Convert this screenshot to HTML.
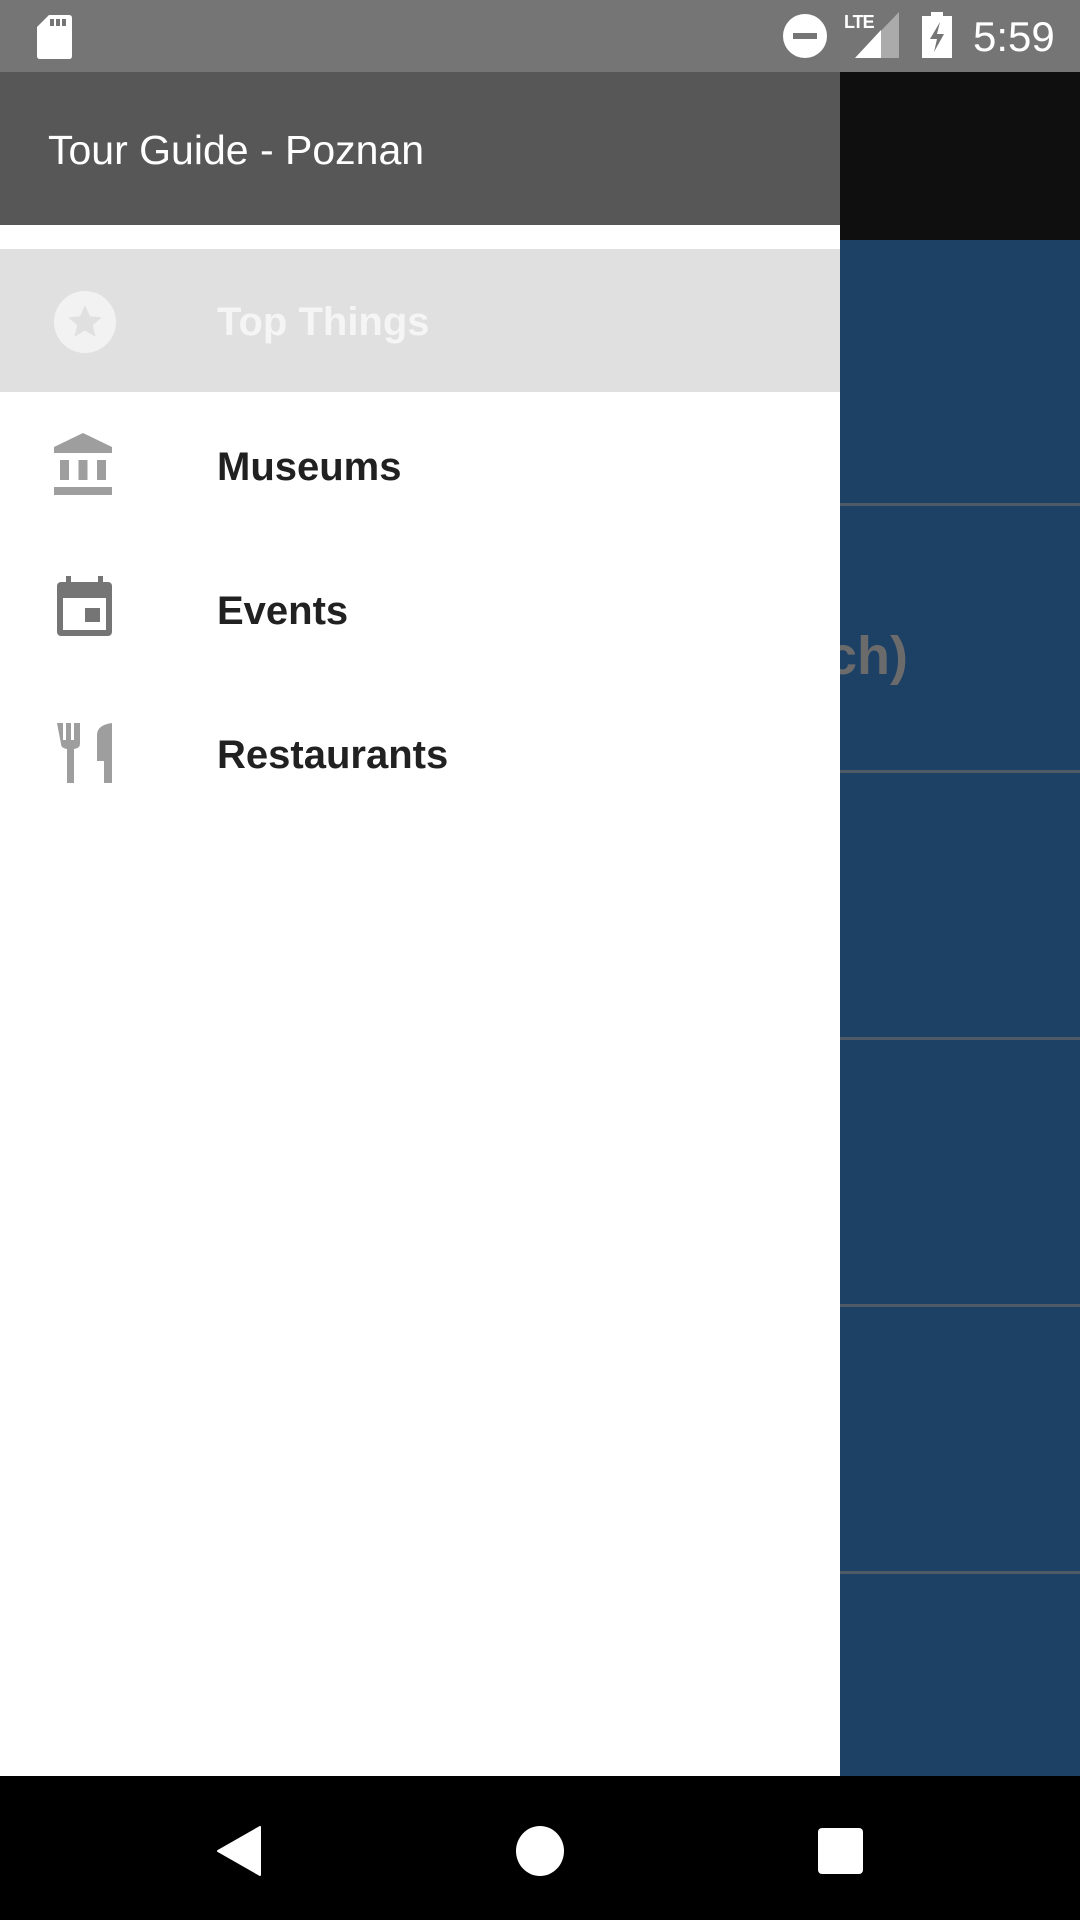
<!DOCTYPE html>
<html><head><meta charset="utf-8"><style>
*{margin:0;padding:0;box-sizing:border-box}
body{width:1080px;height:1920px;position:relative;overflow:hidden;font-family:"Liberation Sans",sans-serif;background:#1d4065}
.abs{position:absolute}
.sb{left:0;top:0;width:1080px;height:72px;background:#757575}
.appbar{left:840px;top:72px;width:240px;height:168px;background:#0f0f0f}
.line{left:840px;width:240px;height:3px;background:#4e5a66}
.drawer{left:0;top:72px;width:840px;height:1704px;background:#fff}
.hdr{left:0;top:72px;width:840px;height:153px;background:#575757;color:#fff;font-size:41px;padding:55px 0 0 48px}
.sel{left:0;top:249px;width:840px;height:143px;background:#e0e0e0}
.item{left:217px;font-size:40px;font-weight:bold;color:#212121}
.nav{left:0;top:1776px;width:1080px;height:144px;background:#000}
</style></head><body>
<div class="abs appbar"></div>
<div class="abs line" style="top:503px"></div>
<div class="abs line" style="top:770px"></div>
<div class="abs line" style="top:1037px"></div>
<div class="abs line" style="top:1304px"></div>
<div class="abs line" style="top:1571px"></div>
<div class="abs" style="left:827px;top:625px;font-size:54px;font-weight:bold;color:#6b6b6b">ch)</div>
<div class="abs drawer"></div>
<div class="abs hdr">Tour Guide - Poznan</div>
<div class="abs sel"></div>
<svg class="abs" style="left:54px;top:291px" width="62" height="62" viewBox="0 0 24 24"><circle cx="12" cy="12" r="12" fill="#f2f2f2"/><path d="M12 5.5l1.9 4.3 4.6.4-3.5 3 1.1 4.5L12 15.3l-4.1 2.4 1.1-4.5-3.5-3 4.6-.4z" fill="#e0e0e0"/></svg>
<div class="abs item" style="top:300px;color:#f5f5f5">Top Things</div>
<svg class="abs" style="left:54px;top:433px" width="58" height="62" viewBox="0 0 58 62"><path d="M29 0L58 14V20H0V14Z" fill="#9e9e9e"/><rect x="6" y="27" width="9" height="20" fill="#9e9e9e"/><rect x="24.5" y="27" width="9" height="20" fill="#9e9e9e"/><rect x="43" y="27" width="9" height="20" fill="#9e9e9e"/><rect x="0" y="54" width="58" height="8" fill="#9e9e9e"/></svg>
<div class="abs item" style="top:445px">Museums</div>
<svg class="abs" style="left:57px;top:576px" width="55" height="60" viewBox="0 0 55 60"><rect x="9" y="0" width="5" height="8" fill="#757575"/><rect x="41" y="0" width="5" height="8" fill="#757575"/><rect x="0" y="6" width="55" height="54" rx="4" fill="#757575"/><rect x="6" y="22" width="43" height="32" fill="#fff"/><rect x="28" y="32" width="15" height="14" fill="#757575"/></svg>
<div class="abs item" style="top:589px">Events</div>
<svg class="abs" style="left:57px;top:723px" width="55" height="60" viewBox="0 0 55 60"><path d="M0 0h6v17h3V0h5v17h3V0h6v21q0 4-6 5V60h-7V26q-6-1-6-5z" fill="#9e9e9e"/><path d="M55 0V60h-8V38h-7V12Q40 2 55 0z" fill="#9e9e9e"/></svg>
<div class="abs item" style="top:733px">Restaurants</div>
<div class="abs sb"></div>
<svg class="abs" style="left:37px;top:15px" width="35" height="44" viewBox="0 0 35 44"><path d="M12 0H32Q35 0 35 3V41Q35 44 32 44H3Q0 44 0 41V12Z" fill="#fff"/><rect x="13" y="4" width="4" height="7" fill="#757575"/><rect x="19" y="4" width="4" height="7" fill="#757575"/><rect x="25" y="4" width="4" height="7" fill="#757575"/></svg>
<svg class="abs" style="left:783px;top:14px" width="44" height="44" viewBox="0 0 44 44"><circle cx="22" cy="22" r="22" fill="#fff"/><rect x="10" y="19" width="24" height="6" fill="#757575"/></svg>
<div class="abs" style="left:844px;top:12px;font-size:18px;font-weight:bold;color:#fff;letter-spacing:-1px">LTE</div>
<svg class="abs" style="left:855px;top:12px" width="44" height="46" viewBox="0 0 44 46"><path d="M44 0V46H0Z" fill="#ababab"/><path d="M26 18V46H0Z" fill="#fff"/></svg>
<svg class="abs" style="left:922px;top:12px" width="30" height="46" viewBox="0 0 30 46"><rect x="9" y="0" width="12" height="5" fill="#fff"/><rect x="0" y="4" width="30" height="42" fill="#fff"/><path d="M18 10L8 27h7l-3 13 10-18h-7z" fill="#757575"/></svg>
<div class="abs" style="left:973px;top:13px;font-size:42px;color:#fff">5:59</div>
<div class="abs nav"></div>
<svg class="abs" style="left:216px;top:1826px" width="46" height="50" viewBox="0 0 46 50"><path d="M44 1V49L2 25Z" fill="#fff" stroke="#fff" stroke-width="2" stroke-linejoin="round"/></svg>
<div class="abs" style="left:516px;top:1826px;width:48px;height:50px;border-radius:50%;background:#fff"></div>
<div class="abs" style="left:818px;top:1828px;width:45px;height:46px;border-radius:4px;background:#fff"></div>
</body></html>
